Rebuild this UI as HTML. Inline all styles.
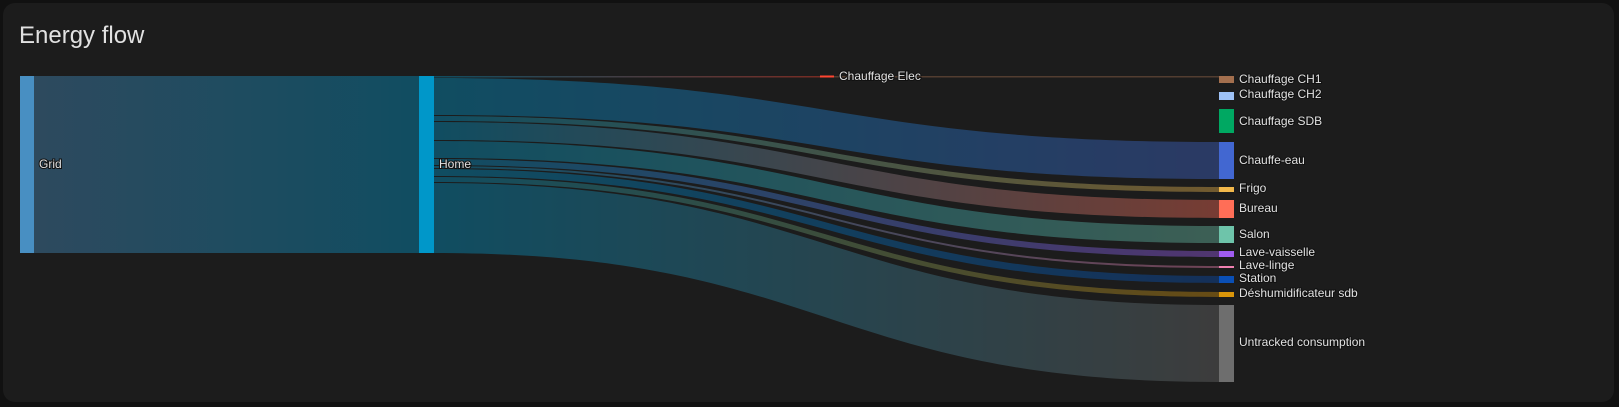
<!DOCTYPE html>
<html><head><meta charset="utf-8"><style>
html,body{margin:0;padding:0;background:#111111;width:1619px;height:407px;overflow:hidden}
.card{position:absolute;left:3px;top:3px;width:1611px;height:399px;background:#1c1c1c;border-radius:12px}
h1{position:absolute;left:19px;top:22px;margin:0;font:400 24px "Liberation Sans",sans-serif;color:#e1e1e1}
svg{position:absolute;left:0;top:0}
text{font-family:"Liberation Sans",sans-serif;font-size:12px;fill:#e1e1e1;paint-order:stroke;stroke:#111;stroke-width:2px}
</style></head><body>
<div class="card"></div>
<h1>Energy flow</h1>
<svg width="1619" height="407" viewBox="0 0 1619 407">
<defs>
<linearGradient id="gh" x1="0" x2="1"><stop offset="0" stop-color="#488fc2"/><stop offset="1" stop-color="#0097c9"/></linearGradient>
<linearGradient id="g1" x1="0" x2="1"><stop offset="0" stop-color="#0097c9"/><stop offset="1" stop-color="#4267d1"/></linearGradient>
<linearGradient id="g2" x1="0" x2="1"><stop offset="0" stop-color="#0097c9"/><stop offset="1" stop-color="#f2b84b"/></linearGradient>
<linearGradient id="g3" x1="0" x2="1"><stop offset="0" stop-color="#0097c9"/><stop offset="1" stop-color="#ff6e57"/></linearGradient>
<linearGradient id="g4" x1="0" x2="1"><stop offset="0" stop-color="#0097c9"/><stop offset="1" stop-color="#6ec4aa"/></linearGradient>
<linearGradient id="g5" x1="0" x2="1"><stop offset="0" stop-color="#0097c9"/><stop offset="1" stop-color="#a05cf0"/></linearGradient>
<linearGradient id="g6" x1="0" x2="1"><stop offset="0" stop-color="#0097c9"/><stop offset="1" stop-color="#f080b0"/></linearGradient>
<linearGradient id="g7" x1="0" x2="1"><stop offset="0" stop-color="#0097c9"/><stop offset="1" stop-color="#0a4fb5"/></linearGradient>
<linearGradient id="g8" x1="0" x2="1"><stop offset="0" stop-color="#0097c9"/><stop offset="1" stop-color="#d9950a"/></linearGradient>
<linearGradient id="g9" x1="0" x2="1"><stop offset="0" stop-color="#0097c9"/><stop offset="1" stop-color="#6e6e6e"/></linearGradient>
<linearGradient id="ge" x1="0" x2="1"><stop offset="0" stop-color="#0097c9"/><stop offset="1" stop-color="#ff4530"/></linearGradient>
</defs>
<g opacity="0.4">
<rect x="34" y="76" width="385" height="177" fill="url(#gh)"/>
<path d="M434 78 C826 78,826 142,1219 142 L1219 179 C826 179,826 115,434 115Z" fill="url(#g1)"/>
<path d="M434 116 C826 116,826 187,1219 187 L1219 192 C826 192,826 121,434 121Z" fill="url(#g2)"/>
<path d="M434 122 C826 122,826 200,1219 200 L1219 218 C826 218,826 140,434 140Z" fill="url(#g3)"/>
<path d="M434 141 C826 141,826 226,1219 226 L1219 243 C826 243,826 158,434 158Z" fill="url(#g4)"/>
<path d="M434 159 C826 159,826 251,1219 251 L1219 257 C826 257,826 165,434 165Z" fill="url(#g5)"/>
<path d="M434 166 C826 166,826 266,1219 266 L1219 268 C826 268,826 168,434 168Z" fill="url(#g6)"/>
<path d="M434 169 C826 169,826 276,1219 276 L1219 283 C826 283,826 176,434 176Z" fill="url(#g7)"/>
<path d="M434 177 C826 177,826 292,1219 292 L1219 297 C826 297,826 182,434 182Z" fill="url(#g8)"/>
<path d="M434 183 C826 183,826 305,1219 305 L1219 382 C826 382,826 253,434 253Z" fill="url(#g9)"/>
<path d="M434 76 L820 76 L820 77.5 L434 77.5Z" fill="url(#ge)"/>
<path d="M834 76 L1219 76 L1219 77.5 L834 77.5Z" fill="#a36f4e"/>
</g>
<rect x="20" y="76" width="14" height="177" fill="#488fc2"/>
<rect x="419" y="76" width="15" height="177" fill="#0097c9"/>
<rect x="820" y="75.5" width="14" height="2" fill="#ff4530"/>
<rect x="1219" y="76" width="15" height="7" fill="#a36f4e"/>
<rect x="1219" y="92" width="15" height="8" fill="#9ec1f5"/>
<rect x="1219" y="109" width="15" height="24" fill="#00a862"/>
<rect x="1219" y="142" width="15" height="37" fill="#4267d1"/>
<rect x="1219" y="187" width="15" height="5" fill="#f2b84b"/>
<rect x="1219" y="200" width="15" height="18" fill="#ff6e57"/>
<rect x="1219" y="226" width="15" height="17" fill="#6ec4aa"/>
<rect x="1219" y="251" width="15" height="6" fill="#a05cf0"/>
<rect x="1219" y="266" width="15" height="2" fill="#f080b0"/>
<rect x="1219" y="276" width="15" height="7" fill="#0a4fb5"/>
<rect x="1219" y="292" width="15" height="5" fill="#d9950a"/>
<rect x="1219" y="305" width="15" height="77" fill="#6e6e6e"/>
<text x="39" y="168">Grid</text>
<text x="439" y="168">Home</text>
<text x="839" y="80">Chauffage Elec</text>
<text x="1239" y="83">Chauffage CH1</text>
<text x="1239" y="98">Chauffage CH2</text>
<text x="1239" y="125">Chauffage SDB</text>
<text x="1239" y="164">Chauffe-eau</text>
<text x="1239" y="192">Frigo</text>
<text x="1239" y="212">Bureau</text>
<text x="1239" y="238">Salon</text>
<text x="1239" y="256">Lave-vaisselle</text>
<text x="1239" y="269">Lave-linge</text>
<text x="1239" y="282">Station</text>
<text x="1239" y="297">Déshumidificateur sdb</text>
<text x="1239" y="346">Untracked consumption</text>
</svg>
</body></html>
